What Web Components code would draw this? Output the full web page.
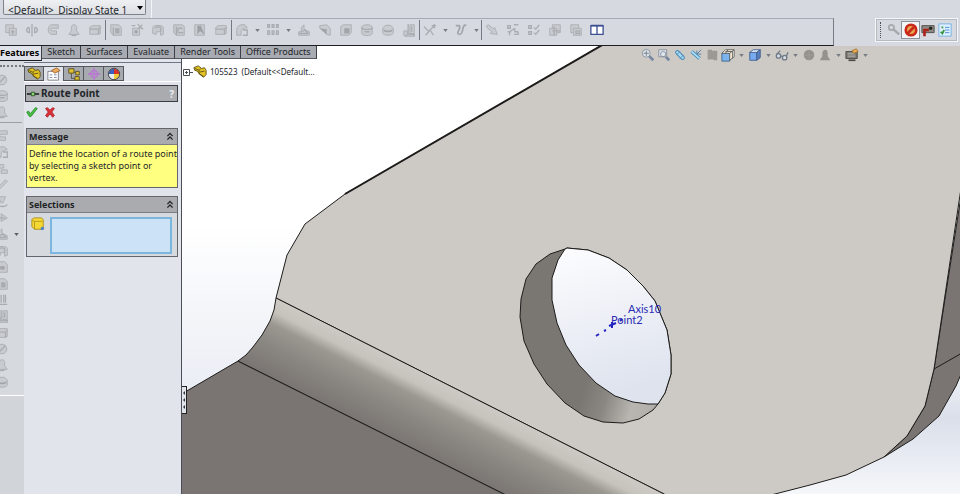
<!DOCTYPE html>
<html lang="en">
<head>
<meta charset="utf-8">
<title>Route Point</title>
<style>
  html, body {
    height: 100%;
    margin: 0;
  }
  body {
    font-family: "Noto Sans", "Open Sans", sans-serif;
    font-size: 9px;
    color: #22252a;
    background: #d6dae0;
    overflow: hidden;
  }
</style>
</head>
<body>
<cad-app></cad-app>

<script>
// small drawings on a 16 x 16 grid
const G = 'fill="#c8cbcf" stroke="#a9adb1"';
const L = 'fill="none" stroke="#a9adb1" stroke-width="1.5"';
const icons = {
  extrude: `<path ${G} d="M2 2h9v9H2z"/><path ${G} d="M6 6h8v8H6z"/><path ${L} d="M8 10h4M10 8v5"/>`,
  revolve: `<path ${L} d="M8 1v14M5 5C1 5 1 11 5 11V5M11 5c4 0 4 6 0 6V5"/>`,
  sweep: `<path ${G} d="M14 2H7C1 2 1 13 7 13h5v-4H7c-2 0-2-3 0-3h7z"/>`,
  loft: `<path ${G} d="M5 5c0-4 6-4 6 0v4l3 4H2l3-4z"/><path ${L} d="M5 13c1 2 5 2 6 0"/>`,
  boundary: `<path ${G} d="M2 5l3-2h9v9l-2 1H2z"/><path ${L} d="M2 7h10l2-2M12 7v6"/>`,
  cut: `<path ${G} d="M2 2h9l3 3v9H5l-3-3z"/><path fill="#a9adb1" d="M7 6h5v6H7z"/><path ${L} d="M5 5v9"/>`,
  hole: `<path ${G} d="M3 6h8v8H3z"/><path ${L} d="M9 7l5-5M9 1l2 3M15 7l-3-2M2 3h4"/><circle cx="7" cy="10" r="2" fill="#a2a6ab"/>`,
  revcut: `<path ${G} d="M2 5c0-3 12-3 12 0v8l-3 1v-4H6v3l-4-1z"/><path ${L} d="M5 6c0-2 6-2 6 0v4"/>`,
  sweepcut: `<path ${G} d="M2 2h10l2 2v10H5l-3-3z"/><path ${L} d="M12 6H8c-2 0-2 5 0 5h5M5 4v10"/>`,
  loftcut: `<path ${G} d="M2 2h11v12H2z"/><path fill="#9da1a6" d="M5 3h4l4 10-5-4-3 4z"/>`,
  fillet: `<path ${G} d="M2 14V8c0-4 3-6 6-6h3l3 3-3 1c-2 0-4 2-4 4v4z"/><path ${L} d="M9 8h5v6H9"/>`,
  pattern: `<g ${L}><path d="M2 2h2v3H2zM7 2h2v3H7zM12 2h2v3h-2zM2 9h2v4H2zM7 9h2v4H7zM12 9h2v4h-2z"/></g>`,
  rib: `<path ${G} d="M2 10h3V5l3-3v5l6 3v4H2z"/><path ${L} d="M5 10l4-2 4 4M2 12h10"/>`,
  draft: `<path ${G} d="M2 3l8-1 4 4v8l-4-1-8-7z"/><path fill="#a2a6ab" d="M2 6l8 1v6z"/>`,
  shell: `<path ${G} d="M2 4l3-2h9v9l-3 3H2z"/><path fill="#a2a6ab" d="M6 6h6v6H6z"/>`,
  wrap: `<path ${G} d="M2 5c0-4 12-4 12 0v7c0 3-12 3-12 0z"/><path ${L} d="M2 5c0 3 12 3 12 0M5 10h6"/>`,
  dome: `<path ${G} d="M2 7c0-6 12-6 12 0v4c0 4-12 4-12 0z"/><path fill="#a2a6ab" d="M3 7c2 2 8 2 10 0v2c-2 2-8 2-10 0z"/>`,
  mirror: `<path ${G} d="M2 9h4v5H2zM9 2h5v10H9z"/><path ${L} d="M7 1v12h7v2H3M11 4v6"/>`,
  refgeo: `<path ${L} d="M1 4l5 5M3 14l5-6 5-5M8 8l4 6M10 3h5M13 1v5"/>`,
  curve: `<path fill="none" stroke="#a2a6ab" stroke-width="2" d="M2 3h4c3 3-5 9 0 10 5 0 3-6 5-9 1-2 2-2 3-1"/>`,
  instant: `<path ${G} d="M2 3l2-1 6 5 1-2 3 8-8-1 2-2-6-5z"/>`,
  tree: `<path ${L} d="M2 3h3v3H2zM9 2h5M10 6l-6 4v4M10 6v4h4M2 10h4M9 13h5v-3"/>`,
  checks: `<path ${L} d="M2 3h3v3H2zM2 10h3v3H2zM8 5l2 2 4-5M8 11l2 2 4-5"/>`,
  copies: `<path ${G} d="M5 2h9v9H5z"/><path ${G} d="M2 6h8v8H2z"/><path ${L} d="M5 9h9M7 4v10"/>`,
  combine: `<path ${G} d="M2 2h9v9H2z"/><path ${G} d="M5 6h9v8H5z"/><path ${L} d="M8 9h4v3H8z"/>`,
  panes: `<path fill="#fff" stroke="#3c4f92" stroke-width="1.5" d="M1 3h14v10H1zM8 3v10"/><path stroke="#3c4f92" stroke-width="2" d="M1 3h14"/>`,
  wrench: `<path fill="none" stroke="#a6aaae" stroke-width="3" d="M7 7l7 6"/><circle cx="5" cy="5" r="3" fill="#d6dae0" stroke="#a6aaae" stroke-width="2"/>`,
  nosign: `<circle cx="8" cy="8" r="6" fill="#e9a54c" stroke="#c9281b" stroke-width="3"/><path stroke="#c9281b" stroke-width="3" d="M12 4l-8 8"/>`,
  gun: `<path fill="#8f8b83" stroke="#4a4744" d="M1 3h14v8H1z"/><path fill="none" stroke="#ae2119" stroke-width="3" d="M4 15V8h5"/><circle cx="11" cy="6" r="2" fill="#292724"/>`,
  list: `<path fill="#ddf0ff" stroke="#70aee2" d="M1 1h14v14H1z"/><path stroke="#4387cf" d="M8 5h5M8 8h5M8 11h5"/><path fill="none" stroke="#38943c" stroke-width="2" d="M3 10l2 2 2-4M4 5h2"/>`,
  zoomfit: `<path stroke="#7786a0" stroke-width="3" d="M9 9l5 5"/><circle cx="6" cy="6" r="4.5" fill="#dde5ec" stroke="#858e9b"/><path fill="none" stroke="#717784" d="M6 3v6M3 6h6"/>`,
  zoomarea: `<path stroke="#7786a0" stroke-width="3" d="M10 10l4 4"/><path fill="#dde5ec" stroke="#858e9b" d="M2 2h9v8H2z"/><circle cx="7" cy="7" r="3" fill="none" stroke="#858e9b"/>`,
  prevview: `<path stroke="#3e83b5" stroke-width="5" stroke-linecap="round" d="M5 5l6 6"/><path stroke="#a7dcf5" stroke-width="3" stroke-linecap="round" d="M5 5l6 6"/><path stroke="#5689ab" d="M4 8l4-4M8 12l4-4"/>`,
  section: `<path stroke="#3e83b5" stroke-width="4" d="M3 4l9 8"/><path stroke="#a7dcf5" stroke-width="2" d="M3 4l9 8"/><path fill="none" stroke="#4a7aa7" d="M14 2l-5 5M9 3v4h5"/>`,
  ghost: `<path fill="#9b9995" d="M3 2h5v1h6v11h-4v-1H3z"/>`,
  views: `<path fill="#7db4f0" stroke="#3b6284" d="M1 6h9v9H1z"/><path fill="#fff5df" stroke="#575a5d" d="M1 6l4-4h10v8l-5 4V6zM10 6l5-4M5 4h8M8 2L5 6M13 4v8"/>`,
  display: `<path fill="#78aaf0" stroke="#405c8b" d="M2 5h8v9H2z"/><path fill="#e6effd" stroke="#405c8b" d="M2 5l4-3h8l-4 3z"/><path fill="#597fbf" stroke="#405c8b" d="M10 5l4-3v9l-4 3z"/>`,
  glasses: `<g fill="#d7dce2" stroke="#6e7989" stroke-width="1.5"><circle cx="4" cy="9" r="2.5"/><circle cx="11" cy="11" r="2.5"/><path fill="none" d="M2 7l4-4M6 9l3 1M13 9l2-4"/></g>`,
  ball: `<circle cx="8" cy="8" r="6" fill="#94928e"/><path stroke="#9f9d99" fill="none" d="M3 8h10M8 3v10"/>`,
  scene: `<path fill="#94928e" d="M2 14l3-5V5c1-4 6-4 6 0v4l3 5z"/>`,
  monitor: `<path fill="#77756f" stroke="#4c4b47" d="M1 4h13v8H1z"/><path stroke="#b7b4ae" d="M3 6h8M3 8h9M3 10h9"/><path fill="#edaa4e" stroke="#a67635" d="M8 3l5-2 2 3-5 2z"/><path stroke="#4c4b47" stroke-width="2" d="M4 14h8"/>`,
  part: `<path fill="#e4c421" stroke="#584c16" d="M1 3l5-2 4 3 3-1 2 3v5l-3 3-5-4-2-3-3-1z"/><path fill="none" stroke="#584c16" d="M2 4l5 2v4l5 3M9 4l-2 2M8 8l5-1"/>`,
  property: `<path fill="#fff" stroke="#777c82" d="M1 5h12v10H1z"/><path stroke="#7481a1" d="M3 9h3M3 12h3M8 9h3M8 12h3"/><path fill="#eca95a" stroke="#9b6333" d="M5 4l6-3 4 3-6 3z"/>`,
  config: `<path fill="none" stroke="#4c4b45" d="M5 7v6h5M5 6h6"/><path fill="#dfc130" stroke="#554b22" d="M2 2h6v5H2zM10 5h4v4h-4zM9 11h5v4H9z"/>`,
  target: `<circle cx="8" cy="8" r="4" fill="none" stroke="#ba75d4" stroke-width="1.5"/><path stroke="#ba75d4" stroke-width="1.5" d="M8 1v14M1 8h14"/>`,
  colours: `<path fill="#3a60bd" d="M8 8V2a6 6 0 0 0-6 6z"/><path fill="#d93228" d="M8 8h6a6 6 0 0 0-6-6z"/><path fill="#e9eef3" d="M8 8H2a6 6 0 0 0 6 6z"/><path fill="#f0cc3a" d="M8 8v6a6 6 0 0 0 6-6z"/><circle cx="8" cy="8" r="6.5" fill="none" stroke="#3d3b45"/>`,
  point: `<path stroke="#2d302d" stroke-width="2" d="M1 8h14"/><path fill="#91d36c" stroke="#24502a" d="M6 6h4v4H6z"/>`,
  tick: `<path fill="#4bc142" stroke="#238a27" d="M2 8l2-1 2 3 6-7 2 1-7 9H5z"/>`,
  cross: `<path fill="#df3038" stroke="#ab1f2a" d="M3 4l2-1 3 3 3-3 2 1-3 4 3 4-2 2-3-4-3 4-2-2 3-4z"/>`,
  cube: `<path fill="#f5d834" stroke="#a78a15" d="M1 3l2-2h9l2 2v9l-2 2H4l-3-3z"/><path fill="none" stroke="#b2961f" d="M1 3l3 2h9M4 5v9"/><circle cx="13" cy="13" r="2" fill="#5086c7"/>`,
  chevrons: `<path fill="none" stroke="#25272c" stroke-width="1.5" d="M5 7l3-3 3 3M5 11l3-3 3 3"/>`,
  ring: `<circle cx="8" cy="8" r="5.5" ${G}/><path ${L} d="M4 12l8-8"/>`,
  pencil: `<path ${G} d="M3 13l1-3 8-8 2 2-8 8z"/>`,
  steps: `<path ${G} d="M3 3h7v4H3zM7 9h7v4H7z"/>`,
  cone: `<path ${G} d="M4 2h8L9 9H7z"/><path ${L} d="M4 10c0 4 8 4 10 1"/>`,
  arrowr: `<path ${G} d="M7 3l7 5-7 4z"/><path ${L} d="M2 8h9"/>`,
  posts: `<path ${L} d="M7 2v9M12 2v9M10 2v9M3 13h11"/>`,
  page: `<path ${G} d="M2 2h9l3 3v9H2z"/><path fill="#a2a6ab" d="M6 7h5v4H6z"/>`,
};

class UiIcon extends HTMLElement {
  constructor() {
    super();
    this.attachShadow({ mode: 'open' });
  }
  connectedCallback() {
    this.shadowRoot.innerHTML = `
      <style>
        :host { display: block; flex: none; width: 14px; height: 14px; }
        svg { display: block; width: 100%; height: 100%; }
      </style>
      <svg viewBox="0 0 16 16" aria-hidden="true">${icons[this.getAttribute('name')]}</svg>
    `;
  }
}
customElements.define('ui-icon', UiIcon);

// a row of tools: "|" is a divider and "v" a drop-down arrow
class ToolStrip extends HTMLElement {
  constructor() {
    super();
    this.attachShadow({ mode: 'open' });
  }
  connectedCallback() {
    const parts = this.getAttribute('tools').split(' ').map(name => {
      if (name === '|') return '<i class="divider"></i>';
      if (name === 'v') return '<button class="more" aria-label="more"><svg viewBox="0 0 6 4"><path d="M0 0h6L3 4z"/></svg></button>';
      return `<button class="tool ${name}" aria-label="${name}"><ui-icon name="${name}"></ui-icon></button>`;
    });
    this.shadowRoot.innerHTML = `
      <style>
        :host { display: flex; align-items: center; --size: 21px; }
        button {
          display: grid;
          place-items: center;
          box-sizing: border-box;
          flex: none;
          padding: 0;
          border: 0;
          background: none;
        }
        .tool { width: var(--size); height: 16px; }
        .more { width: var(--more, 10px); height: 16px; }
        .more svg { width: 5px; height: 3px; fill: #777b82; }
        .divider { width: 1px; height: 20px; margin-right: -1px; background: #747a83; }
        :host([hud]) { --size: 16px; --more: 11px; }
        :host([addins]) { --size: 17px; }
        :host([addins]) .nosign { background: #f3f4f6; outline: 1px solid #8d929a; }
      </style>
      ${parts.join('')}
    `;
  }
}
customElements.define('tool-strip', ToolStrip);

class StateBar extends HTMLElement {
  constructor() {
    super();
    this.attachShadow({ mode: 'open' }).innerHTML = `
      <style>
        :host { display: flex; height: 18px; }
        label {
          display: grid;
          align-items: center;
          width: 143px;
          margin-left: 3px;
          padding-right: 5px;
          border-right: 1px solid #f2f4f7;
        }
        select, svg { grid-area: 1 / 1; }
        select {
          appearance: none;
          box-sizing: border-box;
          width: 100%;
          height: 15px;
          align-self: start;
          padding: 3px 0 0 4px;
          border: 1px solid #7e838b;
          border-top: 0;
          border-radius: 0 0 2px 2px;
          background: linear-gradient(#eff0f2, #dcdfe3);
          color: #22252a;
          font: 10px/14px "Noto Sans", sans-serif;
        }
        svg { justify-self: end; width: 6px; height: 4px; margin: 0 3px 2px 0; }
      </style>
      <label>
        <select aria-label="Display state"><option>&lt;Default&gt;_Display State 1</option></select>
        <svg viewBox="0 0 6 4"><path d="M0 0h6L3 4z"/></svg>
      </label>
    `;
  }
}
customElements.define('state-bar', StateBar);

class CommandBar extends HTMLElement {
  constructor() {
    super();
    this.attachShadow({ mode: 'open' }).innerHTML = `
      <style>
        :host { display: flex; align-items: flex-start; height: 28px; }
        .features {
          flex: 1;
          box-sizing: border-box;
          height: 28px;
          margin-right: 41px;
          border-top: 1px solid #a4aab2;
          border-right: 1px solid #777c84;
          border-bottom: 1px solid #1c1e22;
          padding-bottom: 4px;
          overflow: hidden;
        }
        .addins {
          height: 22px;
          margin-right: 2px;
          padding: 0 4px;
          border: 1px solid #f4f6f8;
          outline: 1px solid #b5bac1;
          outline-offset: -2px;
        }
        .addins::before {
          content: "";
          height: 16px;
          margin-right: 4px;
          border-left: 1px dotted #4b4f56;
        }
      </style>
      <tool-strip class="features" tools="extrude revolve sweep loft boundary | cut hole revcut sweepcut loftcut boundary | fillet v pattern v rib draft shell wrap dome mirror | refgeo v curve v | instant tree checks copies combine panes"></tool-strip>
      <tool-strip class="addins" addins tools="wrench nosign gun list"></tool-strip>
    `;
  }
}
customElements.define('command-bar', CommandBar);

class CommandTabs extends HTMLElement {
  constructor() {
    super();
    this.attachShadow({ mode: 'open' }).innerHTML = `
      <style>
        :host { display: flex; align-items: flex-start; }
        button {
          box-sizing: border-box;
          height: 13px;
          padding: 0 5px;
          border: 0;
          border-right: 1px solid #3c3f45;
          border-bottom: 1px solid #55585e;
          background: #a8abb1;
          color: #22252a;
          font: 9px/12px "Noto Sans", sans-serif;
          white-space: nowrap;
        }
        .on {
          height: 15px;
          padding: 0 2px 0 0;
          border-bottom-color: #1c1e22;
          background: #dfe3e9;
          color: #000;
          font-weight: bold;
        }
      </style>
      <button class="on">Features</button>
      <button>Sketch</button>
      <button>Surfaces</button>
      <button>Evaluate</button>
      <button>Render Tools</button>
      <button>Office Products</button>
    `;
  }
}
customElements.define('command-tabs', CommandTabs);

class SideRail extends HTMLElement {
  constructor() {
    super();
    this.attachShadow({ mode: 'open' });
  }
  connectedCallback() {
    const group = names => names.split(' ').map(n =>
      `<button aria-label="${n}"><ui-icon name="${n}"></ui-icon>${n === 'rib' ? '<svg viewBox="0 0 6 4"><path d="M0 0h6L3 4z"/></svg>' : ''}</button>`).join('');
    this.shadowRoot.innerHTML = `
      <style>
        :host { display: block; background: #d1d5da; overflow: hidden; }
        .rail { padding-top: 6px; background: #d6dade; border-bottom: 1px solid #fff; }
        .grip { border-top: 2px dotted #777b82; margin-bottom: 5px; }
        .group { display: flex; flex-direction: column; justify-content: space-between; }
        .group + .group { border-top: 1px solid #9ba0a7; margin: 2px 2px 0 0; padding: 5px 0; min-height: 262px; }
        button {
          display: flex;
          align-items: center;
          gap: 5px;
          height: 16px;
          margin-left: -5px;
          padding: 0;
          border: 0;
          background: none;
        }
        svg { width: 5px; height: 3px; fill: #5c6066; }
      </style>
      <div class="rail">
        <div class="grip"></div>
        <div class="group">${group('ring wrap loft')}</div>
        <div class="group">${group('sweep fillet steps pencil cone arrowr rib revcut page cut posts mirror boundary ring loft dome')}</div>
      </div>
    `;
  }
}
customElements.define('side-rail', SideRail);

// collapsible box of the property page
class PropGroup extends HTMLElement {
  constructor() {
    super();
    this.attachShadow({ mode: 'open' });
  }
  connectedCallback() {
    this.shadowRoot.innerHTML = `
      <style>
        :host { display: block; border: 1px solid #63666c; background: #d6d9de; }
        button {
          display: flex;
          align-items: center;
          justify-content: space-between;
          box-sizing: border-box;
          width: 100%;
          height: 16px;
          padding: 0 0 0 2px;
          border: 0;
          border-bottom: 1px solid #7b7e84;
          background: #a9abaf;
          color: #1d1f23;
          font: bold 9px/15px "Noto Sans", sans-serif;
        }
      </style>
      <button>${this.getAttribute('heading')}<ui-icon name="chevrons"></ui-icon></button>
      <slot></slot>
    `;
    const button = this.shadowRoot.querySelector('button');
    const slot = this.shadowRoot.querySelector('slot');
    button.addEventListener('click', () => {
      slot.style.display = slot.style.display === 'none' ? '' : 'none';
    });
  }
}
customElements.define('prop-group', PropGroup);

class PropertyPage extends HTMLElement {
  constructor() {
    super();
    this.attachShadow({ mode: 'open' }).innerHTML = `
      <style>
        :host {
          display: block;
          border-right: 1px solid #4a4e57;
          background: #e1e5eb;
          padding-top: 3px;
        }
        button { padding: 0; border: 0; background: none; }
        nav {
          display: flex;
          padding-top: 3px;
          border-top: 1px solid #6f7784;
          border-bottom: 1px solid #fff;
        }
        nav button {
          display: grid;
          place-items: center;
          box-sizing: border-box;
          width: 20px;
          height: 15px;
          border: 1px solid #54575d;
          border-left-width: 0;
          background: #a7aaaf;
        }
        nav button:first-child { border-left-width: 1px; }
        nav .on { border-bottom: 0; background: #e1e5eb; }
        .page { padding: 3px 3px 0 1px; }
        h1 {
          display: flex;
          align-items: center;
          gap: 1px;
          box-sizing: border-box;
          height: 17px;
          margin: 0;
          border: 1px solid #3a3d43;
          background: #a9abaf;
          font: bold 10px/15px "Noto Sans", sans-serif;
        }
        h1 button { margin: 0 3px 0 auto; color: #eceef1; font: bold 10px/14px "Noto Sans", sans-serif; }
        .actions { display: flex; gap: 4px; padding: 3px 0 9px 0; }
        prop-group { margin: 0 0 8px 1px; }
        p { margin: 0; padding: 3px 0 3px 2px; background: #ffff80; line-height: 12px; }
        .pick { display: flex; gap: 5px; padding: 4px 5px 2px 4px; }
        textarea {
          flex: 1;
          min-width: 0;
          box-sizing: border-box;
          height: 37px;
          border: 2px solid #7ab6dd;
          background: #cce3f7;
          resize: none;
        }
      </style>
      <nav>
        <button aria-label="Tree"><ui-icon name="part"></ui-icon></button>
        <button class="on" aria-label="Properties"><ui-icon name="property"></ui-icon></button>
        <button aria-label="Configurations"><ui-icon name="config"></ui-icon></button>
        <button aria-label="Dimensions"><ui-icon name="target"></ui-icon></button>
        <button aria-label="Display"><ui-icon name="colours"></ui-icon></button>
      </nav>
      <div class="page">
        <h1><ui-icon name="point"></ui-icon>Route Point<button aria-label="Help">?</button></h1>
        <div class="actions">
          <button aria-label="OK"><ui-icon name="tick"></ui-icon></button>
          <button aria-label="Cancel"><ui-icon name="cross"></ui-icon></button>
        </div>
        <prop-group heading="Message">
          <p>Define the location of a route point by selecting a sketch point or vertex.</p>
        </prop-group>
        <prop-group heading="Selections">
          <div class="pick">
            <ui-icon name="cube"></ui-icon>
            <textarea aria-label="Selections" readonly></textarea>
          </div>
        </prop-group>
      </div>
    `;
  }
}
customElements.define('property-page', PropertyPage);

class ModelView extends HTMLElement {
  constructor() {
    super();
    this.attachShadow({ mode: 'open' }).innerHTML = `
      <style>
        :host { display: grid; grid-template: minmax(0, 1fr) / minmax(0, 1fr); overflow: hidden; }
        .scene, .tree, .hud, .handle { grid-area: 1 / 1; }
        .scene { width: 100%; height: 100%; }
        .hud { justify-self: end; align-self: start; margin: 1px 89px 0 0; }
        .tree {
          display: flex;
          align-items: center;
          align-self: start;
          justify-self: start;
          margin: 18px 0 0 1px;
          font-size: 8px;
          line-height: 16px;
        }
        .tree svg { width: 10px; height: 7px; }
        .tree span { margin-left: 3px; white-space: pre; }
        .handle {
          display: grid;
          place-content: center;
          gap: 3px;
          align-self: start;
          box-sizing: border-box;
          width: 5px;
          height: 28px;
          margin-top: 340px;
          padding: 0;
          border: 1px solid #1f2125;
          border-left: 0;
          background: #e1e5eb;
        }
        .handle i { border: 2px solid transparent; border-right-color: #34373d; border-left: 0; }
        text { font: 11px Lato, "Noto Sans", sans-serif; fill: #2b2bb4; }
      </style>
      <svg class="scene" viewBox="182 46 778 448" preserveAspectRatio="xMinYMin slice">
        <defs>
          <linearGradient id="sky" gradientUnits="userSpaceOnUse" x1="500" y1="46" x2="500" y2="494">
            <stop offset="0.4" stop-color="#fff"/>
            <stop offset="0.75" stop-color="#ebeef5"/>
            <stop offset="0.83" stop-color="#dadfea"/>
            <stop offset="1" stop-color="#f5f7fa"/>
          </linearGradient>
          <linearGradient id="through" x1="0" y1="0" x2="0.2" y2="1">
            <stop offset="0" stop-color="#fdfdff"/>
            <stop offset="1" stop-color="#dee3ee"/>
          </linearGradient>
          <linearGradient id="bend" gradientUnits="userSpaceOnUse" x1="276" y1="298" x2="243" y2="363">
            <stop offset="0" stop-color="#cdcac5"/>
            <stop offset="0.18" stop-color="#c6c3bd"/>
            <stop offset="0.34" stop-color="#9b9892"/>
            <stop offset="0.6" stop-color="#8b8782"/>
            <stop offset="1" stop-color="#7a7572"/>
          </linearGradient>
          <linearGradient id="wall" gradientUnits="userSpaceOnUse" x1="580" y1="400" x2="656" y2="424">
            <stop offset="0" stop-color="#7a7672"/>
            <stop offset="0.3" stop-color="#8a8682"/>
            <stop offset="0.65" stop-color="#b9b6b1"/>
            <stop offset="1" stop-color="#b0ada8"/>
          </linearGradient>
        </defs>
        <rect x="182" y="46" width="778" height="448" fill="url(#sky)"/>
        <g stroke="#1d1c1b" stroke-linejoin="round">
          <path fill="#7a7572" d="M180 395L238 361L504 494V500H180z"/>
          <path fill="#7a7572" d="M962 190V372L956 386L939 416L913 439L884 457L907 436L925 406L934 369z"/>
          <path fill="none" d="M934 369L962 353"/>
          <path fill="#cdcac5" d="M604 44L345 194L305 224L287 255L276 298L664 494L668 500H750L775 494L810 485L846 475L884 457L907 436L925 406L934 369L960 195L964 170V44z"/>
          <path fill="url(#bend)" d="M276 298L274 310L270 321L262 335L253 347L246 355L238 361L504 494L516 500H676L664 494z"/>
          <path fill="none" stroke-width="2" d="M604 44L345 194"/>
          <path fill="url(#wall)" d="M565 249L550 254L536 264L526 279L521 299L520 317L524 341L534 364L547 384L565 403L584 416L603 422L623 423L639 419L653 410L658 404L665 393L671 374L671 355L667 330L655 301L643 286L627 270L609 258L588 250L567 248z"/>
          <path fill="url(#through)" d="M565 249L558 260L552 278L552 300L557 323L566 345L579 365L596 383L615 396L633 402L648 404L658 404L665 393L671 374L671 355L667 330L655 301L643 286L627 270L609 258L588 250L567 248z"/>
        </g>
        <path fill="none" stroke="#2424c4" stroke-width="2" d="M596 336L599 334M604 331L606 330M609 326L616 323M612 322V328M620 321L622 319"/>
        <text x="628" y="313">Axis10</text>
        <text x="611" y="324">Point2</text>
      </svg>
      <tool-strip class="hud" hud tools="zoomfit zoomarea prevview section ghost views v display v glasses v ball scene v monitor v"></tool-strip>
      <div class="tree">
        <svg viewBox="0 0 10 7"><path fill="#fff" stroke="#4c4f55" d="M.5.5h6v6h-6zM2 3.5h3M3.5 2v3M7 3.5h3"/></svg>
        <ui-icon name="part"></ui-icon>
        <span>105523  (Default&lt;&lt;Default...</span>
      </div>
      <button class="handle" aria-label="Collapse panel"><i></i><i></i><i></i></button>
    `;
  }
}
customElements.define('model-view', ModelView);

class CadApp extends HTMLElement {
  constructor() {
    super();
    this.attachShadow({ mode: 'open' }).innerHTML = `
      <style>
        :host { display: flex; flex-direction: column; height: 100vh; }
        main {
          flex: 1;
          min-height: 0;
          display: grid;
          grid-template: 13px minmax(0, 1fr) / 24px 158px minmax(0, 1fr);
        }
        model-view { grid-area: 1 / 3 / 3 / 4; }
        command-tabs { grid-area: 1 / 1 / 2 / 4; z-index: 1; justify-self: start; }
        side-rail { grid-area: 2 / 1; }
        property-page { grid-area: 2 / 2; }
      </style>
      <state-bar></state-bar>
      <command-bar></command-bar>
      <main>
        <model-view></model-view>
        <command-tabs></command-tabs>
        <side-rail></side-rail>
        <property-page></property-page>
      </main>
    `;
  }
}
customElements.define('cad-app', CadApp);
</script>
</body>
</html>
